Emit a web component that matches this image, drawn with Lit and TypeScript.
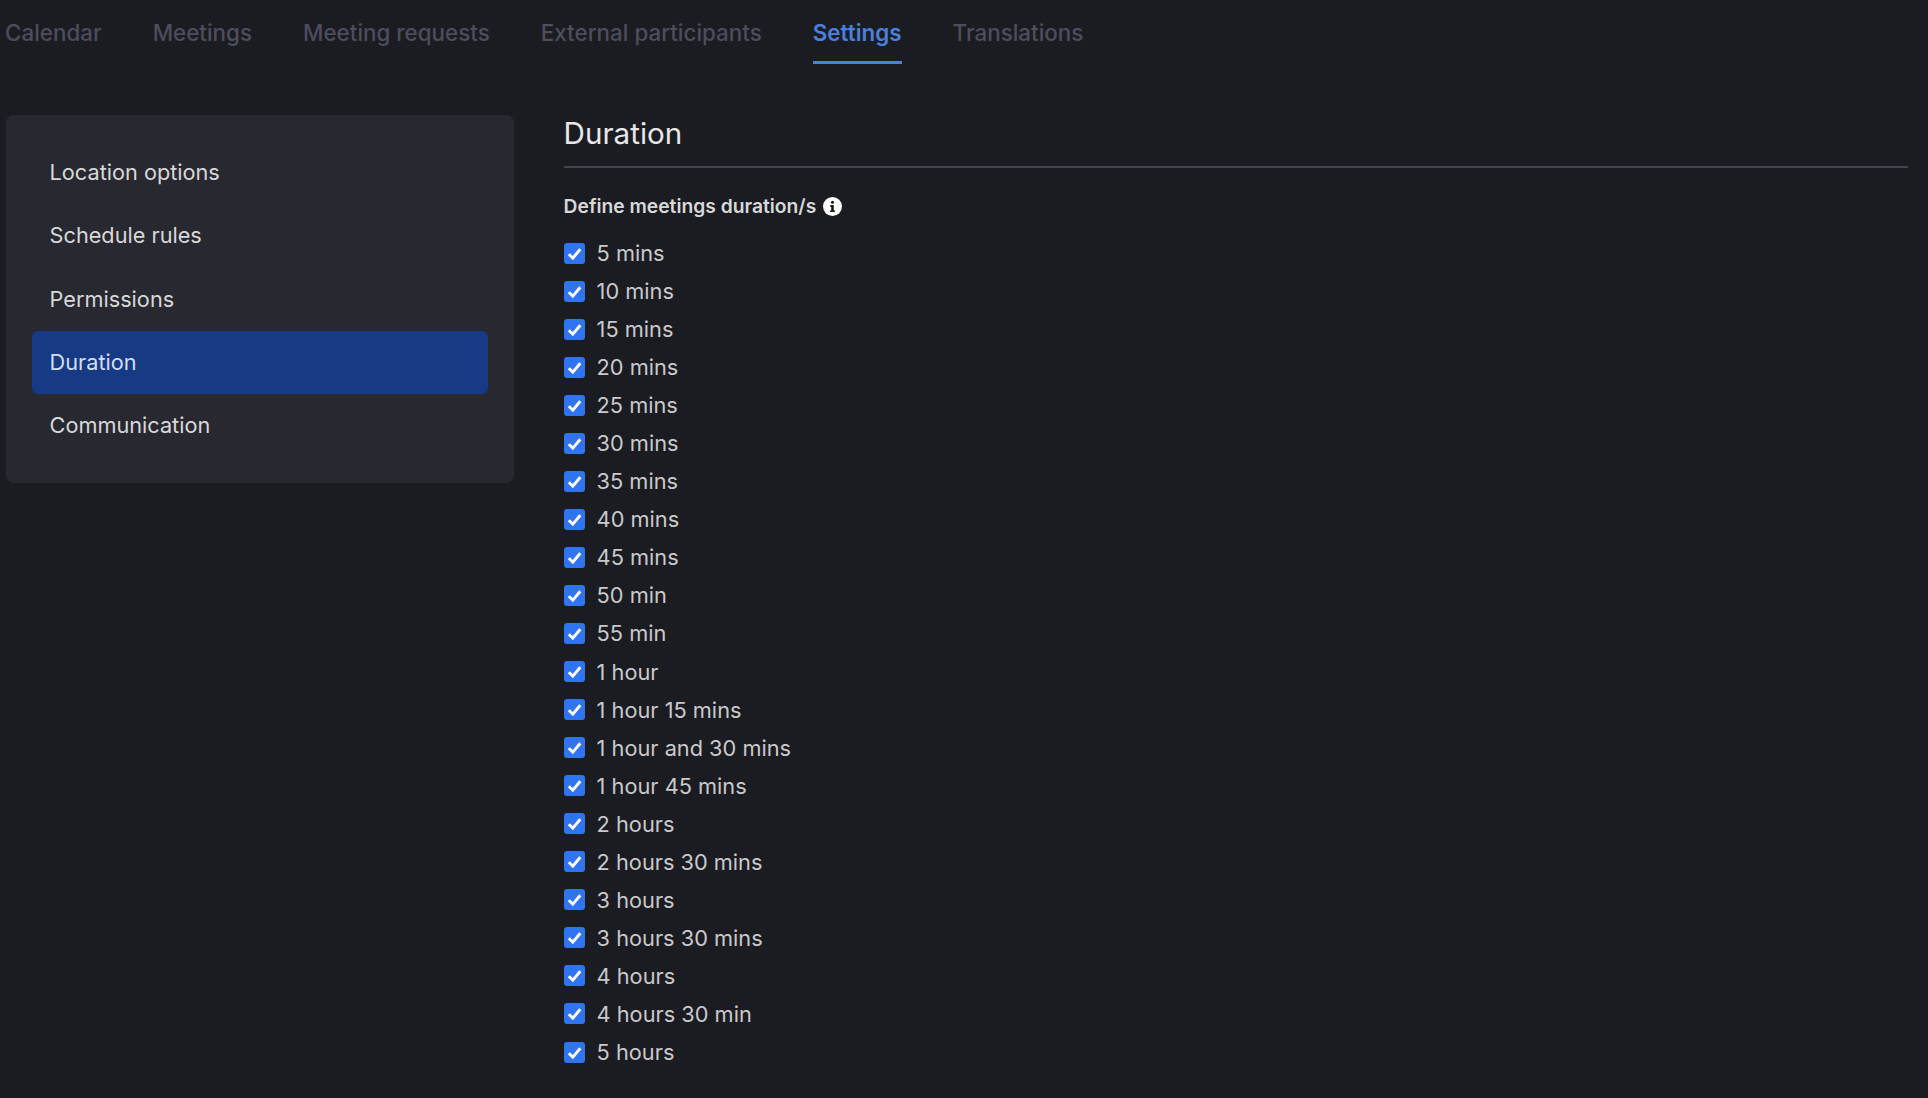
import { LitElement, html, css, svg } from "lit";
import { customElement } from "lit/decorators.js";

const TABS = ["Calendar", "Meetings", "Meeting requests", "External participants", "Settings", "Translations"];
const NAV = ["Location options", "Schedule rules", "Permissions", "Duration", "Communication"];
const OPTS = ["5 mins","10 mins","15 mins","20 mins","25 mins","30 mins","35 mins","40 mins","45 mins","50 min","55 min","1 hour","1 hour 15 mins","1 hour and 30 mins","1 hour 45 mins","2 hours","2 hours 30 mins","3 hours","3 hours 30 mins","4 hours","4 hours 30 min","5 hours"];

@customElement("app-root")
export class AppRoot extends LitElement {
  static styles = css`
    :host { display: block; width: 1928px; height: 1098px; background: #1b1c21; overflow: hidden;
      font-family: Inter, "Noto Sans", sans-serif; color: #dcdcdf; }
    .tabs { display: flex; gap: 51px; height: 64px; padding-left: 5px; box-sizing: border-box; }
    .tab { font-size: 22.4px; font-weight: 500; color: #4d4d5e; line-height: 65px; height: 64px; box-sizing: border-box; }
    .tab.on { color: #4a7fdc; font-weight: 600; border-bottom: 3px solid #4a7fdc; }
    .body { display: flex; padding: 51px 20px 0 6px; gap: 49.6px; }
    .side { width: 508px; height: 368px; flex: none; box-sizing: border-box; background: #282930; border-radius: 8px; padding: 26px; }
    .item { height: 63.3px; line-height: 63.3px; padding-left: 17.6px; font-size: 21.7px; border-radius: 6px; color: #d8d8da; }
    .item.on { background: #163a84; color: #d5def0; }
    .main { flex: 1; min-width: 0; }
    h2 { margin: 0; font-size: 29.6px; font-weight: 400; line-height: 37px; color: #e8e8ea; padding-bottom: 13.5px; border-bottom: 2px solid #44444f; }
    .label { display: flex; align-items: center; gap: 7px; margin-top: 25.5px; font-size: 19.25px; font-weight: 600; color: #d8d8da; line-height: 26px; }
    .label svg { width: 19px; height: 19px; }
    .list { margin-top: 15px; }
    .opt { display: flex; align-items: center; gap: 12px; height: 38.05px; font-size: 21.75px; color: #c9c9cc; }
    .box { width: 21px; height: 21px; border-radius: 3px; background: #2f74f0; display: flex; align-items: center; justify-content: center; }
    .box svg { width: 17px; height: 17px; }
  `;
  render() {
    const check = svg`<path d="M2.5 8.2 6 11.6 12.6 3.8" fill="none" stroke="#fff" stroke-width="2.6"/>`;
    return html`
      <div class="tabs">${TABS.map((t) => html`<div class="tab ${t === "Settings" ? "on" : ""}">${t}</div>`)}</div>
      <div class="body">
        <div class="side">${NAV.map((n) => html`<div class="item ${n === "Duration" ? "on" : ""}">${n}</div>`)}</div>
        <div class="main">
          <h2>Duration</h2>
          <div class="label">Define meetings duration/s
            <svg viewBox="0 0 20 20"><circle cx="10" cy="10" r="10" fill="#fff"/><rect x="8.6" y="8.6" width="2.8" height="7" fill="#1b1c21"/><rect x="7.4" y="8.6" width="3" height="1.7" fill="#1b1c21"/><rect x="7.4" y="14.2" width="5.2" height="1.6" fill="#1b1c21"/><circle cx="10" cy="5.6" r="1.6" fill="#1b1c21"/></svg>
          </div>
          <div class="list">${OPTS.map((o) => html`<div class="opt"><span class="box"><svg viewBox="0 0 15 15">${check}</svg></span>${o}</div>`)}</div>
        </div>
      </div>`;
  }
}
